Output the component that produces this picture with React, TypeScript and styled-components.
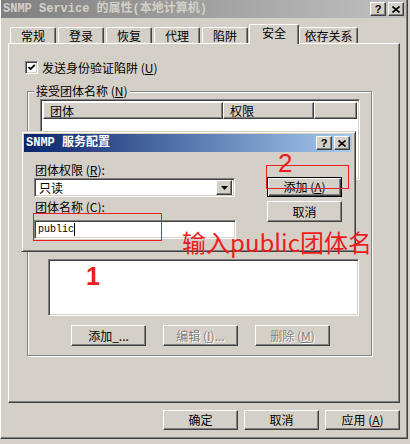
import React from 'react';
import styled, { createGlobalStyle, css } from 'styled-components';

const GlobalStyle = createGlobalStyle`
  html, body { margin: 0; padding: 0; background: #d4d0c8; }
  body {
    font-family: "Noto Sans CJK SC", "Liberation Sans", sans-serif;
    font-size: 12px;
    color: #000;
  }
  * { box-sizing: border-box; }
`;

const raised = css`
  border: 1px solid;
  border-color: #fff #404040 #404040 #fff;
  box-shadow: inset -1px -1px 0 #808080;
  background: #d4d0c8;
`;

const sunken = css`
  border: 1px solid;
  border-color: #808080 #fff #fff #808080;
  box-shadow: inset 1px 1px 0 #404040, inset -1px -1px 0 #d4d0c8;
  background: #fff;
`;

const Window = styled.div`
  position: relative;
  width: 408px;
  height: 439px;
  background: #d4d0c8;
  border-left: 1px solid #fff;
  border-right: 1px solid #404040;
  border-bottom: 1px solid #404040;
  box-shadow: inset -1px -1px 0 #808080;
  display: flex;
  flex-direction: column;
`;

const TitleBar = styled.div<{ $active?: boolean }>`
  height: 18px;
  flex: none;
  display: flex;
  align-items: center;
  padding: 0 2px 0 2px;
  margin-right: 1px;
  background: ${(p) =>
    p.$active
      ? 'linear-gradient(to right, #0a246a, #a6caf0)'
      : 'linear-gradient(to right, #808080, #c0c0c0)'};
`;

const TitleText = styled.div<{ $active?: boolean }>`
  flex: 1;
  font-family: "Liberation Mono", "Noto Sans CJK SC", monospace;
  font-weight: bold;
  font-size: 12px;
  line-height: 18px;
  color: ${(p) => (p.$active ? '#fff' : '#d4d0c8')};
  white-space: nowrap;
  overflow: hidden;
`;

const CaptionButton = styled.div`
  ${raised};
  width: 16px;
  height: 14px;
  margin-left: 2px;
  display: flex;
  align-items: center;
  justify-content: center;
  font-family: "Liberation Sans", sans-serif;
  font-weight: bold;
  font-size: 11px;
  line-height: 11px;
  color: #000;
`;

const Body = styled.div`
  padding: 6px 7px 0 7px;
  display: flex;
  flex-direction: column;
`;

const TabsRow = styled.div`
  display: flex;
  align-items: flex-end;
  height: 19px;
  padding-left: 2px;
  position: relative;
  z-index: 1;
`;

const Tab = styled.div<{ $w: number; $mr: number; $sel?: boolean }>`
  width: ${(p) => p.$w}px;
  margin-right: ${(p) => p.$mr}px;
  height: ${(p) => (p.$sel ? 20 : 16)}px;
  margin-bottom: ${(p) => (p.$sel ? -1 : 0)}px;
  background: #d4d0c8;
  border-top: 1px solid #fff;
  border-left: 1px solid #fff;
  border-right: 1px solid #404040;
  box-shadow: inset -1px 0 0 #808080;
  border-radius: 2px 2px 0 0;
  display: flex;
  justify-content: center;
  align-items: flex-start;
  padding-top: ${(p) => (p.$sel ? 1 : 1)}px;
  line-height: 14px;
  font-size: 12px;
  white-space: nowrap;
`;

const Panel = styled.div`
  width: 392px;
  height: 360px;
  border: 1px solid;
  border-color: #fff #404040 #404040 #fff;
  box-shadow: inset -1px -1px 0 #808080;
  padding: 17px 0 0 16px;
  display: flex;
  flex-direction: column;
`;

const CheckRow = styled.div`
  display: flex;
  align-items: center;
  gap: 4px;
  height: 13px;
  line-height: 14px;
`;

const CheckBox = styled.div`
  ${sunken};
  width: 13px;
  height: 13px;
  display: flex;
  align-items: center;
  justify-content: center;
`;

const U = styled.span`
  text-decoration: underline;
`;

const GroupBox = styled.div`
  position: relative;
  margin: 17px 0 0 2px;
  width: 345px;
  height: 265px;
  border: 1px solid #808080;
  box-shadow: inset 1px 1px 0 #fff, 1px 1px 0 #fff;
  padding: 7px 0 0 12px;
  display: flex;
  flex-direction: column;
`;

const Legend = styled.div`
  position: absolute;
  top: -8px;
  left: 6px;
  padding: 0 2px;
  background: #d4d0c8;
  line-height: 14px;
  white-space: nowrap;
`;

const ListView = styled.div`
  ${sunken};
  width: 320px;
  height: 81px;
  padding: 2px;
  display: flex;
  flex-direction: column;
`;

const HeaderRow = styled.div`
  display: flex;
  height: 17px;
`;

const HeaderCell = styled.div<{ $w?: number }>`
  ${raised};
  ${(p) => (p.$w ? `width: ${p.$w}px;` : 'flex: 1;')}
  height: 17px;
  padding-left: 6px;
  line-height: 15px;
`;

const WhiteBox = styled.div`
  ${sunken};
  margin: 79px 0 0 8px;
  width: 311px;
  height: 57px;
`;

const ButtonRow = styled.div`
  display: flex;
  gap: 17px;
  margin-top: 9px;
  padding-left: 31px;
`;

const Button = styled.div<{ $h?: number; $disabled?: boolean; $default?: boolean }>`
  ${raised};
  width: 75px;
  height: ${(p) => p.$h ?? 21}px;
  display: flex;
  align-items: center;
  justify-content: center;
  font-size: 12px;
  line-height: 14px;
  white-space: nowrap;
  color: ${(p) => (p.$disabled ? '#808080' : '#000')};
  text-shadow: ${(p) => (p.$disabled ? '1px 1px 0 #fff' : 'none')};
  ${(p) =>
    p.$default &&
    css`
      border: 1px solid #000;
      box-shadow: inset 1px 1px 0 #fff, inset -1px -1px 0 #404040, inset -2px -2px 0 #808080;
    `}
`;

const Footer = styled.div`
  display: flex;
  justify-content: flex-end;
  gap: 6px;
  margin-top: 7px;
`;

/* Overlapping modal dialog */
const Dialog = styled.div`
  position: absolute;
  left: 20px;
  top: 131px;
  width: 335px;
  height: 121px;
  background: #d4d0c8;
  border: 1px solid;
  border-color: #d4d0c8 #404040 #404040 #d4d0c8;
  box-shadow: inset 1px 1px 0 #fff, inset -1px -1px 0 #808080;
  padding: 2px;
  display: flex;
  flex-direction: column;
  z-index: 2;
`;

const DialogBody = styled.div`
  display: flex;
  gap: 31px;
  padding: 11px 0 0 10px;
`;

const FormCol = styled.div`
  width: 202px;
  display: flex;
  flex-direction: column;
`;

const FieldLabel = styled.div<{ $mt?: number }>`
  margin-top: ${(p) => p.$mt ?? 0}px;
  padding-left: 1px;
  line-height: 14px;
  white-space: nowrap;
`;

const Combo = styled.div`
  ${sunken};
  margin-top: 1px;
  width: 201px;
  height: 19px;
  padding: 2px 2px 2px 4px;
  display: flex;
  align-items: center;
  justify-content: space-between;
  line-height: 14px;
`;

const DropButton = styled.div`
  ${raised};
  width: 16px;
  height: 15px;
  display: flex;
  align-items: center;
  justify-content: center;
`;

const TextInput = styled.div`
  ${sunken};
  margin-top: 6px;
  width: 202px;
  height: 19px;
  padding: 2px 3px;
  display: flex;
  align-items: center;
  font-family: "Liberation Mono", monospace;
  font-size: 10px;
`;

const Caret = styled.span`
  display: inline-block;
  width: 1px;
  height: 13px;
  background: #000;
`;

const ButtonCol = styled.div`
  display: flex;
  flex-direction: column;
  gap: 4px;
  padding-top: 14px;
`;

/* red annotations drawn over the screenshot */
const RedBox = styled.div<{ $x: number; $y: number; $w: number; $h: number }>`
  position: absolute;
  left: ${(p) => p.$x}px;
  top: ${(p) => p.$y}px;
  width: ${(p) => p.$w}px;
  height: ${(p) => p.$h}px;
  border: 1px solid #e82020;
  z-index: 3;
  pointer-events: none;
`;

const RedText = styled.div<{ $x: number; $y: number; $size: number; $bold?: boolean; $cjk?: boolean }>`
  position: absolute;
  left: ${(p) => p.$x}px;
  top: ${(p) => p.$y}px;
  font-size: ${(p) => p.$size}px;
  line-height: 1;
  font-weight: ${(p) => (p.$bold ? 'bold' : 'normal')};
  font-family: ${(p) =>
    p.$cjk ? '"Noto Sans CJK SC", sans-serif' : '"Liberation Sans", Arial, sans-serif'};
  color: #ec1c1c;
  white-space: nowrap;
  z-index: 3;
`;

const HelpGlyph = () => <span>?</span>;

const CloseGlyph = () => (
  <svg width="8" height="7" viewBox="0 0 8 7">
    <path d="M0.5 0.5 L7.5 6.5 M7.5 0.5 L0.5 6.5" stroke="#000" strokeWidth="1.6" />
  </svg>
);

const Check = () => (
  <svg width="9" height="9" viewBox="0 0 9 9">
    <path d="M1.5 4 L3.5 6.2 L7.8 1.8" stroke="#000" strokeWidth="1.8" fill="none" />
  </svg>
);

const DownArrow = () => (
  <svg width="7" height="4" viewBox="0 0 7 4">
    <path d="M0 0 H7 L3.5 4 Z" fill="#000" />
  </svg>
);

const tabs: { label: string; w: number; mr: number; sel?: boolean }[] = [
  { label: '常规', w: 46, mr: 2 },
  { label: '登录', w: 46, mr: 2 },
  { label: '恢复', w: 46, mr: 2 },
  { label: '代理', w: 46, mr: 2 },
  { label: '陷阱', w: 46, mr: 1 },
  { label: '安全', w: 50, mr: 0, sel: true },
  { label: '依存关系', w: 59, mr: 0 },
];

export default function App() {
  return (
    <>
      <GlobalStyle />
      <Window>
        <TitleBar>
          <TitleText>SNMP Service 的属性(本地计算机)</TitleText>
          <CaptionButton>
            <HelpGlyph />
          </CaptionButton>
          <CaptionButton>
            <CloseGlyph />
          </CaptionButton>
        </TitleBar>

        <Body>
          <TabsRow>
            {tabs.map((t) => (
              <Tab key={t.label} $w={t.w} $mr={t.mr} $sel={t.sel}>
                {t.label}
              </Tab>
            ))}
          </TabsRow>
          <Panel>
            <CheckRow>
              <CheckBox>
                <Check />
              </CheckBox>
              <span>
                发送身份验证陷阱 (<U>U</U>)
              </span>
            </CheckRow>
            <GroupBox>
              <Legend>
                接受团体名称 (<U>N</U>)
              </Legend>
              <ListView>
                <HeaderRow>
                  <HeaderCell $w={180}>团体</HeaderCell>
                  <HeaderCell $w={91}>权限</HeaderCell>
                  <HeaderCell />
                </HeaderRow>
              </ListView>
              <WhiteBox />
              <ButtonRow>
                <Button>添加_...</Button>
                <Button $disabled>
                  编辑 (<U>I</U>)...
                </Button>
                <Button $disabled>
                  删除 (<U>M</U>)
                </Button>
              </ButtonRow>
            </GroupBox>
          </Panel>
          <Footer>
            <Button $h={20}>确定</Button>
            <Button $h={20}>取消</Button>
            <Button $h={20}>
              应用 (<U>A</U>)
            </Button>
          </Footer>
        </Body>

        <Dialog>
          <TitleBar $active>
            <TitleText $active>SNMP 服务配置</TitleText>
            <CaptionButton>
              <HelpGlyph />
            </CaptionButton>
            <CaptionButton>
              <CloseGlyph />
            </CaptionButton>
          </TitleBar>
          <DialogBody>
            <FormCol>
              <FieldLabel>
                团体权限 (<U>R</U>):
              </FieldLabel>
              <Combo>
                <span>只读</span>
                <DropButton>
                  <DownArrow />
                </DropButton>
              </Combo>
              <FieldLabel $mt={3}>
                团体名称 (<U>C</U>):
              </FieldLabel>
              <TextInput>
                <span>public</span>
                <Caret />
              </TextInput>
            </FormCol>
            <ButtonCol>
              <Button $h={20} $default>
                添加 (<U>A</U>)
              </Button>
              <Button $h={21}>取消</Button>
            </ButtonCol>
          </DialogBody>
        </Dialog>

        <RedBox $x={32} $y={213} $w={129} $h={28} />
        <RedBox $x={265} $y={165} $w={83} $h={24} />
        <RedText $x={277} $y={150} $size={26}>
          2
        </RedText>
        <RedText $x={85} $y={264} $size={25} $bold>
          1
        </RedText>
        <RedText $x={181} $y={230} $size={24} $cjk>
          输入public团体名
        </RedText>
      </Window>
    </>
  );
}
